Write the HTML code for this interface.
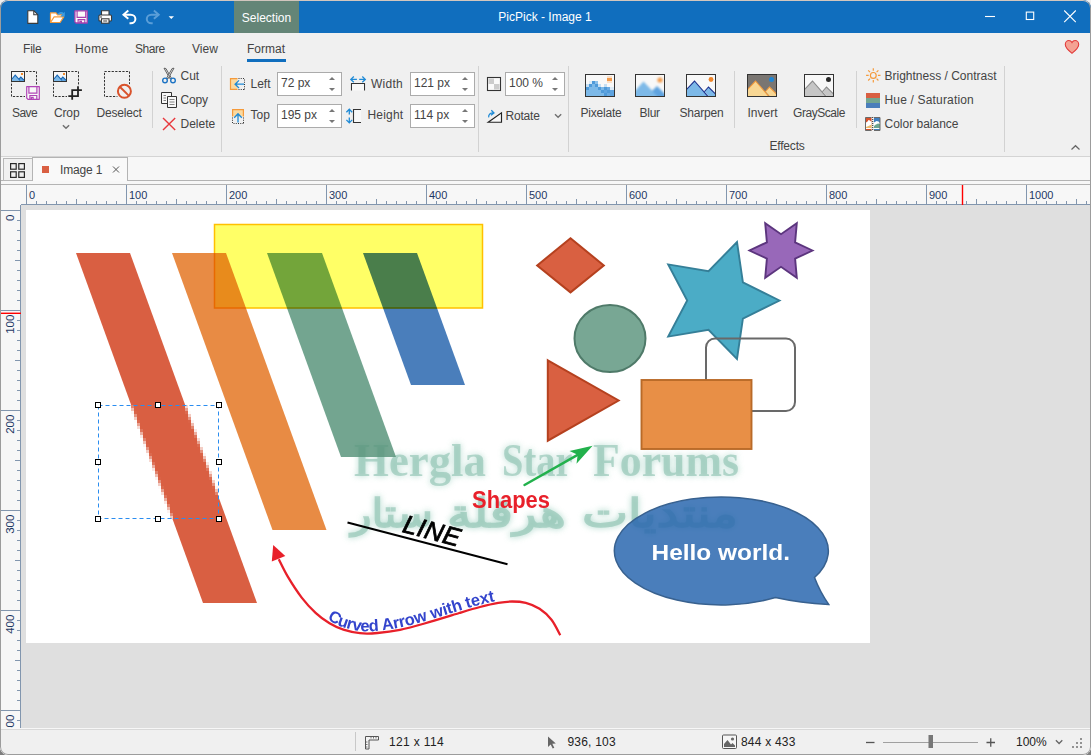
<!DOCTYPE html>
<html>
<head>
<meta charset="utf-8">
<title>PicPick - Image 1</title>
<style>
*{box-sizing:border-box;margin:0;padding:0}
html,body{width:1091px;height:755px;overflow:hidden;background:linear-gradient(#f1efee 0,#f1efee 50%,#7e7e7e 50%,#7e7e7e 100%);font-family:"Liberation Sans",sans-serif;font-size:12px;color:#444}
#win{position:absolute;left:0;top:0;width:1091px;height:755px;background:#f0f0f0;border-radius:8px;overflow:hidden}
#frame{position:absolute;left:0;top:0;width:1091px;height:755px;border-radius:8px;border:1px solid #9c9c9c;border-top-color:#d2c6be;pointer-events:none}
.abs{position:absolute}
#title{position:absolute;left:0;top:0;width:1091px;height:33px;background:#106ebe}
#seltab{position:absolute;left:234px;top:1px;width:65px;height:32px;background:#648577;color:#fff;text-align:center;line-height:14px;padding-top:9.5px;font-size:12px}
#ttext{position:absolute;left:445px;top:9.5px;width:200px;text-align:center;color:#fff;line-height:14px;font-size:12px}
.t{position:absolute;white-space:nowrap;line-height:14px;height:14px;font-size:12px;color:#444}
.sep{position:absolute;width:1px;background:#d2d2d2}
.inp{position:absolute;height:24px;background:#fff;border:1px solid #ababab}
.inp span{position:absolute;left:3px;top:3px;line-height:14px;font-size:12px;color:#444;white-space:nowrap}
.inp i{position:absolute;right:6px;width:0;height:0;border-left:3.5px solid transparent;border-right:3.5px solid transparent}
.inp i.u{top:4px;border-bottom:3.5px solid #777}
.inp i.d{top:15px;border-top:3.5px solid #777}
svg{position:absolute;overflow:visible}
</style>
</head>
<body>
<div id="win">
<!-- TITLE BAR -->
<div id="title"></div>
<div id="seltab">Selection</div>
<div id="ttext">PicPick - Image 1</div>
<svg style="left:0;top:0" width="200" height="33" viewBox="0 0 200 33">
<!-- new -->
<path d="M27.8 10.8h6.2l3.8 3.8v8.8h-10z" fill="#fff" stroke="#3a3a3a" stroke-width="1.1" stroke-linejoin="round"/>
<path d="M33.8 10.8v4h4" fill="none" stroke="#3a3a3a" stroke-width="1.1"/>
<!-- open -->
<path d="M50.5 22.5v-9.7h5.5l1.5 2h4.5v2.2" fill="#fff" stroke="#f59a3a" stroke-width="1.2" stroke-linejoin="round"/>
<path d="M50.5 22.5l3.6-5.6h9.6l-3.6 5.6z" fill="#fff" stroke="#f59a3a" stroke-width="1.2" stroke-linejoin="round"/>
<path d="M58.300 14.600c1-2 3.600-2.400 5.200-.600" fill="none" stroke="#3d9be0" stroke-width="1.600"/>
<path d="M64.800 11.800v4.600h-4.600z" fill="#3d9be0"/>
<!-- save -->
<path d="M74.900 10.800h12.300v12.200h-11.200l-1.100-1.100z" fill="#fafafa" stroke="#a83fae" stroke-width="1.300" stroke-linejoin="round"/>
<path d="M77.100 10.900v6.500h8.600v-6.500M78.100 22.900v-3.300h6.700v3.300M79.900 22.900v-1.600h1.500v1.600" fill="none" stroke="#a83fae" stroke-width="1.150"/>
<!-- print -->
<path d="M101.5 15v-4.3h7.5v4.3" fill="#fff" stroke="#3a3a3a" stroke-width="1.1"/>
<rect x="98.9" y="15" width="12.6" height="6" rx="1" fill="#fff" stroke="#3a3a3a" stroke-width="1.1"/>
<rect x="101.5" y="18.8" width="7.5" height="4.4" fill="#fff" stroke="#3a3a3a" stroke-width="1.1"/>
<path d="M103.200 21h4" stroke="#3a3a3a" stroke-width="1"/><rect x="100.300" y="16.300" width="1.400" height="1.400" fill="#3a3a3a"/>
<!-- undo -->
<path d="M128.3 10.6l-4.8 4.1 4.8 4.1" fill="none" stroke="#fff" stroke-width="2"/>
<path d="M123.8 14.7h7c2.6 0 4.6 1.9 4.6 4.3s-2 4.3-4.6 4.3h-1.3" fill="none" stroke="#fff" stroke-width="2"/>
<!-- redo -->
<path d="M153.9 10.6l4.8 4.1-4.8 4.1" fill="none" stroke="#5a9ed8" stroke-width="2"/>
<path d="M158.4 14.7h-7c-2.6 0-4.6 1.9-4.6 4.3s2 4.3 4.6 4.3h1.3" fill="none" stroke="#5a9ed8" stroke-width="2"/>
<!-- dd -->
<path d="M168.6 16.2h5.4l-2.7 2.8z" fill="#fff"/>
</svg>
<svg style="left:960px;top:0" width="131" height="62" viewBox="960 0 131 62">
<path d="M985 16.5h10" stroke="#fff" stroke-width="1.1"/>
<rect x="1026.3" y="12.1" width="7.4" height="7.4" fill="none" stroke="#fff" stroke-width="1.1"/>
<path d="M1064.2 10.5l11.6 11.6M1075.8 10.5l-11.6 11.6" stroke="#fff" stroke-width="1.1"/>
<path d="M1072 53.3c-3.5-2.8-6.7-5.300-6.700-8.800 0-2.300 1.700-4 3.600-4 1.400 0 2.500.8 3.100 2 .6-1.200 1.700-2 3.100-2 1.900 0 3.600 1.700 3.600 4 0 3.500-3.200 6-6.700 8.800z" fill="#f4a293" stroke="#e23a3a" stroke-width="1.1"/>
<path d="M1071.500 143.500l4 3.800 4-3.800" fill="none" stroke="#666" stroke-width="1.200" transform="translate(0,1) scale(1,-1) translate(0,-292)"/>
</svg>

<!-- MENU -->
<div class="t" style="left:23px;top:42px;letter-spacing:-0.2px">File</div>
<div class="t" style="left:75px;top:42px;letter-spacing:0.4px">Home</div>
<div class="t" style="left:135px;top:42px;letter-spacing:-0.45px">Share</div>
<div class="t" style="left:192px;top:42px">View</div>
<div class="t" style="left:247px;top:42px">Format</div>
<div class="abs" style="left:247px;top:59px;width:39px;height:3px;background:#106ebe"></div>
<svg style="left:0;top:62px" width="1091" height="95" viewBox="0 62 1091 95">
<rect x="11.5" y="71.5" width="25" height="25" fill="none" stroke="#333" stroke-width="1" stroke-dasharray="2.250 1.320"/><g transform="translate(11,71)"><rect x="0.500" y="0.500" width="13" height="10" fill="#f6f6f6" stroke="#333" stroke-width="1"/>
<path d="M1 8l3.200-3.800 3.600 3.800 2-2.200 3.200 3.200v1h-12z" fill="#7db9e8"/><path d="M8 8.200l1.800-2 3.200 3.200v.6h-3.600z" fill="#5ea3df"/><path d="M1 8l3.200-3.800 4.800 5.300M8 8.100l1.800-2.100 3.200 3.200" fill="none" stroke="#1565b5" stroke-width="1.100"/>
<rect x="10" y="2" width="2" height="2" fill="#f08a2c"/></g><g><rect x="25" y="85" width="16" height="16" fill="#f0f0f0"/><path d="M26.700 86.600h12.600v12.700h-11.300l-1.300-1.300z" fill="#f8f8f8" stroke="#b044b6" stroke-width="1.200" stroke-linejoin="round"/>
<path d="M28.900 86.800v6.400h8v-6.400M29.900 99.200v-3.700h6.900v3.700M31.400 99.200v-1.800h1.700v1.800" fill="none" stroke="#b044b6" stroke-width="1.200"/></g>
<rect x="53.5" y="71.5" width="25" height="25" fill="none" stroke="#333" stroke-width="1" stroke-dasharray="2.250 1.320"/><g transform="translate(53,71)"><rect x="0.500" y="0.500" width="13" height="10" fill="#f6f6f6" stroke="#333" stroke-width="1"/>
<path d="M1 8l3.200-3.800 3.600 3.800 2-2.200 3.200 3.200v1h-12z" fill="#7db9e8"/><path d="M8 8.200l1.800-2 3.200 3.200v.6h-3.600z" fill="#5ea3df"/><path d="M1 8l3.200-3.800 4.800 5.300M8 8.100l1.800-2.100 3.200 3.200" fill="none" stroke="#1565b5" stroke-width="1.100"/>
<rect x="10" y="2" width="2" height="2" fill="#f08a2c"/></g><rect x="67" y="85.500" width="16" height="15" fill="#f0f0f0"/>
<path d="M72.200 89.300v10.500M68.300 96.200h10.600M78 86.200v10.900M71.300 90.200h10.600" fill="none" stroke="#222" stroke-width="1.800"/>
<path d="M62.900 125.300l3.100 3 3.100-3" fill="none" stroke="#707070" stroke-width="1.500"/>
<rect x="104.5" y="71.5" width="25" height="25" fill="none" stroke="#333" stroke-width="1" stroke-dasharray="2.250 1.320"/><circle cx="124.400" cy="91.300" r="8.800" fill="#f0f0f0"/><circle cx="124.400" cy="91.300" r="6.500" fill="none" stroke="#d9532c" stroke-width="2"/><path d="M119.800 86.700l9.200 9.200" stroke="#d9532c" stroke-width="2"/>
<g><path d="M164 68.200l1.900.300 5.300 9.300-1.200 1z" fill="#e4e4e4" stroke="#555" stroke-width="0.900" stroke-linejoin="round"/>
<path d="M174 68.200l-1.900.300-5.300 9.300 1.200 1z" fill="#e4e4e4" stroke="#555" stroke-width="0.900" stroke-linejoin="round"/>
<circle cx="165" cy="80.400" r="2.300" fill="none" stroke="#1e74c4" stroke-width="1.400"/><circle cx="173" cy="80.400" r="2.300" fill="none" stroke="#1e74c4" stroke-width="1.400"/></g>
<g fill="#f8f8f8" stroke="#333" stroke-width="1"><path d="M161.500 92.500h10v11h-10z"/><path d="M167.500 96.500h9v11h-9z"/>
<path d="M163.500 95.500h2.500M163.500 98h2.500M163.500 100.500h2.500M169.500 99.500h5M169.500 102h5M169.500 104.500h5" fill="none" stroke="#666" stroke-width="0.800"/></g>
<path d="M163 118l12.200 12M175.200 118l-12.200 12" stroke="#e8383d" stroke-width="1.400"/>
<g><rect x="231" y="79" width="6.500" height="10" fill="#fad9a0"/><path d="M237.500 78.600h-7v10.800h7" fill="none" stroke="#f59a3a" stroke-width="1.200"/>
<path d="M238.500 78.500h6.500M244.500 79.500v10M238.500 89.500h5.500" fill="none" stroke="#333" stroke-width="1" stroke-dasharray="1 1.250"/>
<path d="M244 84.200h-8.600M239 80.400l-3.900 3.800 3.900 3.800" fill="none" stroke="#1e8ad6" stroke-width="1.300"/></g>
<g><rect x="233" y="110" width="10" height="6.500" fill="#fad9a0"/><path d="M232.600 116.500v-6.900h10.800v6.900" fill="none" stroke="#f59a3a" stroke-width="1.200"/>
<path d="M232.500 117.500v6.500M233.500 123.500h10M243.500 117.500v5.500" fill="none" stroke="#333" stroke-width="1" stroke-dasharray="1 1.250"/>
<path d="M238 122.500v-8.300M234.200 117.700l3.800-3.900 3.800 3.900" fill="none" stroke="#1e8ad6" stroke-width="1.300"/></g>
<g fill="none"><path d="M351.500 90.500v-7h13v7" stroke="#333" stroke-width="1.100"/><path d="M351.500 83.800h13" stroke="#333" stroke-width="1" fill="none"/>
<rect x="352" y="84" width="12" height="6.500" fill="#f8f8f8" stroke="none"/>
<path d="M350.800 79.400h6.100M353.800 76.500l-3 2.900 3 2.900M365.300 79.400h-6.100M362.300 76.500l3 2.900-3 2.900" stroke="#1e8ad6" stroke-width="1.300"/></g>
<g fill="none"><rect x="353.500" y="109.500" width="7.500" height="13" fill="#f8f8f8" stroke="none"/><path d="M361 109.500h-7.500v13h7.500" stroke="#333" stroke-width="1.100"/>
<path d="M349.300 109.400v5.200M349.300 122.800v-5.200M346.400 112.300l2.900-3 2.900 3M346.400 119.900l2.900 3 2.900-3" stroke="#1e8ad6" stroke-width="1.300"/></g>
<g><rect x="487.500" y="77.500" width="13" height="13" fill="#fafafa" stroke="#333" stroke-width="1.100"/><rect x="488.500" y="78.500" width="5.500" height="5.500" fill="#ccc"/><rect x="494" y="84" width="5.500" height="5.500" fill="#ccc"/></g>
<g fill="none"><path d="M488.200 122.200h13.300v-9.400z" fill="#f8f8f8" stroke="#222" stroke-width="1.150" stroke-linejoin="miter"/>
<path d="M488.700 117.300c-.400-2.800 1.600-4.500 4.800-4.300M491.300 110.200l2.700 2.800-3 2.300" stroke="#1e8ad6" stroke-width="1.250"/></g>
<path d="M555 114.200l3.100 3 3.100-3" fill="none" stroke="#707070" stroke-width="1.400"/>
</svg>
<div class="sep" style="left:152px;top:71px;height:57px"></div>
<div class="sep" style="left:221px;top:66px;height:86px"></div>
<div class="sep" style="left:478px;top:66px;height:86px"></div>
<div class="sep" style="left:568px;top:66px;height:86px"></div>
<div class="sep" style="left:734px;top:71px;height:57px"></div>
<div class="sep" style="left:856px;top:71px;height:57px"></div>
<div class="sep" style="left:1004px;top:66px;height:86px"></div>
<div class="t" style="left:12px;top:106px;letter-spacing:-0.6px">Save</div>
<div class="t" style="left:54px;top:106px;letter-spacing:-0.15px">Crop</div>
<div class="t" style="left:96.5px;top:106px;letter-spacing:-0.2px">Deselect</div>
<div class="t" style="left:180.5px;top:69px">Cut</div>
<div class="t" style="left:180.5px;top:93px;letter-spacing:-0.2px">Copy</div>
<div class="t" style="left:180.5px;top:116.6px">Delete</div>
<div class="t" style="left:250.5px;top:76.5px">Left</div>
<div class="t" style="left:250.5px;top:108px">Top</div>
<div class="t" style="left:371px;top:76.5px;letter-spacing:0.25px">Width</div>
<div class="t" style="left:367.5px;top:108px;letter-spacing:0.2px">Height</div>
<div class="t" style="left:505.5px;top:108.5px;letter-spacing:-0.2px">Rotate</div>
<div class="t" style="left:580.5px;top:106px;letter-spacing:-0.2px">Pixelate</div>
<div class="t" style="left:639.5px;top:106px;letter-spacing:-0.25px">Blur</div>
<div class="t" style="left:679.5px;top:106px;letter-spacing:-0.2px">Sharpen</div>
<div class="t" style="left:747.5px;top:106px">Invert</div>
<div class="t" style="left:793px;top:106px;letter-spacing:-0.45px">GrayScale</div>
<div class="t" style="left:769.5px;top:138.5px;letter-spacing:-0.2px">Effects</div>
<div class="t" style="left:884.5px;top:69px">Brightness / Contrast</div>
<div class="t" style="left:884.5px;top:93px;letter-spacing:0.17px">Hue / Saturation</div>
<div class="t" style="left:884.5px;top:116.5px">Color balance</div>
<div class="inp" style="left:277px;top:72px;width:65px"><span>72 px</span><i class="u"></i><i class="d"></i></div>
<div class="inp" style="left:277px;top:104px;width:65px"><span>195 px</span><i class="u"></i><i class="d"></i></div>
<div class="inp" style="left:410px;top:72px;width:65px"><span>121 px</span><i class="u"></i><i class="d"></i></div>
<div class="inp" style="left:410px;top:104px;width:65px"><span>114 px</span><i class="u"></i><i class="d"></i></div>
<div class="inp" style="left:505px;top:72px;width:60px"><span>100 %</span><i class="u"></i><i class="d"></i></div>
<div class="abs" style="left:0;top:156px;width:1091px;height:1px;background:#d4d4d4"></div>
<svg style="left:570px;top:62px" width="320" height="80" viewBox="570 62 320 80">
<defs>
<filter id="bl" x="-10%" y="-10%" width="120%" height="120%"><feGaussianBlur stdDeviation="0.9"/></filter>
<clipPath id="cp1"><rect x="586" y="75" width="28" height="21"/></clipPath>
<clipPath id="cp2"><rect x="636" y="75" width="28" height="21"/></clipPath>
<clipPath id="cp3"><rect x="687" y="75" width="28" height="21"/></clipPath>
<clipPath id="cp4"><rect x="748" y="75" width="28" height="21"/></clipPath>
<clipPath id="cp5"><rect x="805" y="75" width="28" height="21"/></clipPath>
</defs>
<!-- Pixelate -->
<rect x="585.500" y="74.500" width="29" height="22" fill="#f8f8f8" stroke="#333" stroke-width="1"/>
<g clip-path="url(#cp1)" shape-rendering="crispEdges">
<rect x="586" y="90" width="28" height="6" fill="#7db9e8"/>
<rect x="586" y="87" width="20" height="3" fill="#7db9e8"/>
<rect x="586" y="87" width="3" height="3" fill="#4f9ad9"/>
<rect x="589" y="84" width="3" height="3" fill="#4f9ad9"/><rect x="592" y="84" width="3" height="3" fill="#7db9e8"/><rect x="595" y="84" width="3" height="3" fill="#4f9ad9"/><rect x="586" y="84" width="3" height="3" fill="#c5dff4"/>
<rect x="592" y="81" width="3" height="3" fill="#4f9ad9"/><rect x="595" y="81" width="3" height="3" fill="#8cc0ea"/><rect x="589" y="81" width="3" height="3" fill="#dcebf7"/>
<rect x="598" y="84" width="3" height="3" fill="#c5dff4"/><rect x="598" y="87" width="3" height="3" fill="#4f9ad9"/><rect x="601" y="87" width="3" height="3" fill="#7db9e8"/>
<rect x="601" y="90" width="3" height="3" fill="#4f9ad9"/><rect x="604" y="87" width="3" height="3" fill="#4f9ad9"/><rect x="607" y="87" width="3" height="3" fill="#6aaae2"/><rect x="604" y="84" width="3" height="3" fill="#c5dff4"/>
<rect x="604" y="90" width="3" height="3" fill="#5ea3df"/><rect x="607" y="90" width="3" height="3" fill="#4f9ad9"/><rect x="610" y="90" width="4" height="3" fill="#5ea3df"/><rect x="610" y="87" width="4" height="3" fill="#dcebf7"/>
<rect x="604" y="93" width="3" height="3" fill="#4f9ad9"/><rect x="607" y="93" width="3" height="3" fill="#6aaae2"/><rect x="610" y="93" width="4" height="3" fill="#5ea3df"/>
<rect x="607" y="78" width="5" height="3" fill="#f39a4a"/><rect x="607" y="75.500" width="5" height="2.500" fill="#fbe0c8"/><rect x="607" y="81" width="5" height="2" fill="#fbe0c8"/>
</g>
<!-- Blur -->
<rect x="635.500" y="74.500" width="29" height="22" fill="#f8f8f8" stroke="#333" stroke-width="1"/>
<g clip-path="url(#cp2)"><g filter="url(#bl)">
<path d="M634 92l9.500-10.500 9.500 10 4-4 9 9v2h-32z" fill="#7db9e8"/>
<path d="M652 91l5-5 9 9v3h-7z" fill="#5ea3df"/>
<circle cx="660" cy="80" r="2.600" fill="#f39a4a"/></g></g>
<!-- Sharpen -->
<rect x="686.500" y="74.500" width="29" height="22" fill="#f8f8f8" stroke="#333" stroke-width="1"/>
<g clip-path="url(#cp3)">
<path d="M686 90l8.500-9 13 15h-21.500z" fill="#7db9e8"/>
<path d="M704.500 91.500l4-4.500 8 8v2h-7z" fill="#7db9e8"/>
<path d="M686 90l8.500-9 13.500 15.500M704.500 91.500l4-4.500 8 8" fill="none" stroke="#1c2f8c" stroke-width="1.100"/>
<circle cx="711" cy="79.500" r="2.400" fill="#f0862a"/></g>
<!-- Invert -->
<rect x="747.500" y="74.500" width="29" height="22" fill="#7a7672" stroke="#333" stroke-width="1"/>
<g clip-path="url(#cp4)">
<path d="M747 90l8.500-9 13 15h-21.500z" fill="#f8d794"/>
<path d="M765.500 91.500l4-4.500 8 8v2h-7z" fill="#f8d794"/>
<path d="M747 90l8.500-9 13.500 15.500M765.500 91.500l4-4.500 8 8" fill="none" stroke="#f59a3a" stroke-width="1.100"/>
<circle cx="771.500" cy="79.500" r="2.500" fill="#1e86d6"/></g>
<!-- GrayScale -->
<rect x="804.500" y="74.500" width="29" height="22" fill="#f8f8f8" stroke="#333" stroke-width="1"/>
<g clip-path="url(#cp5)">
<path d="M804 90l8.500-9 13 15h-21.500z" fill="#c6c6c6"/>
<path d="M822.500 91.500l4-4.500 8 8v2h-7z" fill="#c6c6c6"/>
<path d="M804 90l8.500-9 13.500 15.500M822.500 91.500l4-4.500 8 8" fill="none" stroke="#8a8a8a" stroke-width="1.100"/>
<circle cx="828.500" cy="79.500" r="2.500" fill="#2a2a2a"/></g>
</svg>
<svg style="left:860px;top:62px" width="30" height="80" viewBox="860 62 30 80">
<!-- sun -->
<g fill="none" stroke="#f59a3a" stroke-width="1.200"><circle cx="873.300" cy="75.400" r="2.900"/>
<path d="M873.300 68.200v2.600M873.300 80v2.600M866.100 75.400h2.600M877.900 75.400h2.600M868.200 70.300l1.800 1.800M876.600 78.700l1.800 1.800M868.200 80.500l1.800-1.800M876.600 72.100l1.800-1.800"/></g>
<!-- hue -->
<rect x="866" y="93" width="14" height="5" fill="#d95f42"/><rect x="866" y="98" width="14" height="5" fill="#73a590"/><rect x="866" y="103" width="14" height="5" fill="#4a7ebb"/>
<!-- color balance -->
<rect x="865.500" y="117.500" width="6" height="13" fill="#d8502a"/>
<path d="M866 122.500l1.500-1 1-1.500 1.500.500 1.500 1.500v6.500h-5.500z" fill="#fff"/><path d="M866 127l2.500-1 3-1.500v4h-5.500z" fill="#ecbb6c"/><rect x="866" y="128" width="5.500" height="1" fill="#fff"/>
<path d="M871.500 117.500h-6v13h6" fill="none" stroke="#6a6a6a" stroke-width="1"/>
<rect x="874" y="117.500" width="6" height="13" fill="#3f7fc0"/>
<path d="M874 122.500l2.500-1.500 2 .500 1.500 1.500v5.500h-6z" fill="#fff"/><path d="M874 126l2-1.500 2-1 2 .500v4h-6z" fill="#6fa590"/><rect x="874" y="128" width="5.500" height="1" fill="#fff"/>
<path d="M874 117.500h6v13h-6" fill="none" stroke="#6a6a6a" stroke-width="1"/>
<path d="M872.700 117v14" stroke="#333" stroke-width="1.100" stroke-dasharray="1 1"/>
</svg>

<div class="abs" style="left:0;top:157px;width:1091px;height:28px;background:#f7f7f7"></div>
<div class="abs" style="left:0;top:180px;width:1091px;height:1px;background:#b4b4b4"></div>
<div class="abs" style="left:1px;top:184px;width:1089px;height:1px;background:#b4b4b4"></div>
<div class="abs" style="left:3px;top:158px;width:30px;height:23px;background:#f0f0f0;border:1px solid #b8b8b8"></div>
<div class="abs" style="left:32px;top:157px;width:96px;height:24px;background:#f9f9f9;border:1px solid #b4b4b4;border-bottom:none"></div>
<svg style="left:0;top:157px" width="140" height="28" viewBox="0 157 140 28">
<g fill="none" stroke="#2a2a2a" stroke-width="1.200"><rect x="10.600" y="163.600" width="5.600" height="5.600"/><rect x="18.800" y="163.600" width="5.600" height="5.600"/><rect x="10.600" y="171.800" width="5.600" height="5.600"/><rect x="18.800" y="171.800" width="5.600" height="5.600"/></g>
<rect x="42" y="166" width="7" height="7" fill="#d95f42"/>
<path d="M113 166.500l6 6M119 166.500l-6 6" stroke="#555" stroke-width="1"/>
</svg>
<div class="t" style="left:60px;top:162.500px;letter-spacing:-0.15px">Image 1</div>

<div class="abs" style="left:1px;top:185px;width:1089px;height:20px;background:#f7f7f7"></div>
<div class="abs" style="left:1px;top:205px;width:20px;height:523px;background:#f7f7f7"></div>
<svg style="left:0;top:185px" width="1091" height="543" viewBox="0 185 1091 543" font-family="Liberation Sans, sans-serif" font-size="11" fill="#1f3864">
<path d="M21 204.500h1069" stroke="#8296ae" stroke-width="1"/>
<path d="M20.500 205v523" stroke="#8296ae" stroke-width="1"/>
<path d="M1 210.500h20" stroke="#8296ae" stroke-width="1"/>
<path d="M26.5 185v19M36.5 201v3M46.5 201v3M56.5 201v3M66.5 201v3M76.5 199v5M86.5 201v3M96.5 201v3M106.5 201v3M116.5 201v3M126.5 185v19M136.5 201v3M146.5 201v3M156.5 201v3M166.5 201v3M176.5 199v5M186.5 201v3M196.5 201v3M206.5 201v3M216.5 201v3M226.5 185v19M236.5 201v3M246.5 201v3M256.5 201v3M266.5 201v3M276.5 199v5M286.5 201v3M296.5 201v3M306.5 201v3M316.5 201v3M326.5 185v19M336.5 201v3M346.5 201v3M356.5 201v3M366.5 201v3M376.5 199v5M386.5 201v3M396.5 201v3M406.5 201v3M416.5 201v3M426.5 185v19M436.5 201v3M446.5 201v3M456.5 201v3M466.5 201v3M476.5 199v5M486.5 201v3M496.5 201v3M506.5 201v3M516.5 201v3M526.5 185v19M536.5 201v3M546.5 201v3M556.5 201v3M566.5 201v3M576.5 199v5M586.5 201v3M596.5 201v3M606.5 201v3M616.5 201v3M626.5 185v19M636.5 201v3M646.5 201v3M656.5 201v3M666.5 201v3M676.5 199v5M686.5 201v3M696.5 201v3M706.5 201v3M716.5 201v3M726.5 185v19M736.5 201v3M746.5 201v3M756.5 201v3M766.5 201v3M776.5 199v5M786.5 201v3M796.5 201v3M806.5 201v3M816.5 201v3M826.5 185v19M836.5 201v3M846.5 201v3M856.5 201v3M866.5 201v3M876.5 199v5M886.5 201v3M896.5 201v3M906.5 201v3M916.5 201v3M926.5 185v19M936.5 201v3M946.5 201v3M956.5 201v3M966.5 201v3M976.5 199v5M986.5 201v3M996.5 201v3M1006.5 201v3M1016.5 201v3M1026.5 185v19M1036.5 201v3M1046.5 201v3M1056.5 201v3M1066.5 201v3M1076.5 199v5M1086.5 201v3" stroke="#8296ae" stroke-width="1" fill="none"/>
<text x="29.0" y="198.700">0</text><text x="129.0" y="198.700">100</text><text x="229.0" y="198.700">200</text><text x="329.0" y="198.700">300</text><text x="429.0" y="198.700">400</text><text x="529.0" y="198.700">500</text><text x="629.0" y="198.700">600</text><text x="729.0" y="198.700">700</text><text x="829.0" y="198.700">800</text><text x="929.0" y="198.700">900</text><text x="1029.0" y="198.700">1000</text>
<path d="M17 220.5h3M17 230.5h3M17 240.5h3M17 250.5h3M15 260.5h5M17 270.5h3M17 280.5h3M17 290.5h3M17 300.5h3M1 310.5h19M17 320.5h3M17 330.5h3M17 340.5h3M17 350.5h3M15 360.5h5M17 370.5h3M17 380.5h3M17 390.5h3M17 400.5h3M1 410.5h19M17 420.5h3M17 430.5h3M17 440.5h3M17 450.5h3M15 460.5h5M17 470.5h3M17 480.5h3M17 490.5h3M17 500.5h3M1 510.5h19M17 520.5h3M17 530.5h3M17 540.5h3M17 550.5h3M15 560.5h5M17 570.5h3M17 580.5h3M17 590.5h3M17 600.5h3M1 610.5h19M17 620.5h3M17 630.5h3M17 640.5h3M17 650.5h3M15 660.5h5M17 670.5h3M17 680.5h3M17 690.5h3M17 700.5h3M1 710.5h19M17 720.5h3" stroke="#8296ae" stroke-width="1" fill="none"/>
<text x="14" y="214.6" font-size="11.500" text-anchor="end" transform="rotate(-90 14 214.6)">0</text><text x="14" y="314.6" font-size="11.500" text-anchor="end" transform="rotate(-90 14 314.6)">100</text><text x="14" y="414.6" font-size="11.500" text-anchor="end" transform="rotate(-90 14 414.6)">200</text><text x="14" y="514.6" font-size="11.500" text-anchor="end" transform="rotate(-90 14 514.6)">300</text><text x="14" y="614.6" font-size="11.500" text-anchor="end" transform="rotate(-90 14 614.6)">400</text><text x="14" y="714.6" font-size="11.500" text-anchor="end" transform="rotate(-90 14 714.6)">500</text>
<path d="M962.500 185v20" stroke="#f00" stroke-width="1.400"/><path d="M1 313.300h20" stroke="#f00" stroke-width="1.400"/>
</svg>

<div class="abs" style="left:21px;top:205px;width:1069px;height:523px;background:#dfdfdf"></div>
<div class="abs" style="left:26px;top:210px;width:844px;height:433px;background:#fff;overflow:hidden;isolation:isolate" id="img">
<svg style="left:0;top:0" width="844" height="433" viewBox="26 210 844 433">
<defs><filter id="glow" filterUnits="userSpaceOnUse" x="330" y="430" width="430" height="125"><feGaussianBlur stdDeviation="3"/></filter></defs>
<g fill="#a9d6c8" opacity="0.850" filter="url(#glow)">
<g font-family="Liberation Serif, serif" font-weight="bold" font-size="46"><text x="354" y="475.500" textLength="132" lengthAdjust="spacingAndGlyphs">Hergla</text><text x="502" y="475.500" textLength="70.5" lengthAdjust="spacingAndGlyphs">Star</text><text x="593" y="475.500" textLength="146" lengthAdjust="spacingAndGlyphs">Forums</text></g>
<g font-family="DejaVu Sans, sans-serif" font-size="39" stroke="#a9d6c8" stroke-width="2"><text x="351" y="526.500" textLength="82" lengthAdjust="spacingAndGlyphs">ستار</text><text x="447" y="526.500" textLength="119" lengthAdjust="spacingAndGlyphs">هرقلة</text><text x="582" y="526.500" textLength="156" lengthAdjust="spacingAndGlyphs">منتديات</text></g>
</g>
<g fill="#8fc3b2" opacity="0.620">
<g font-family="Liberation Serif, serif" font-weight="bold" font-size="46"><text x="354" y="475.500" textLength="132" lengthAdjust="spacingAndGlyphs">Hergla</text><text x="502" y="475.500" textLength="70.5" lengthAdjust="spacingAndGlyphs">Star</text><text x="593" y="475.500" textLength="146" lengthAdjust="spacingAndGlyphs">Forums</text></g>
<g font-family="DejaVu Sans, sans-serif" font-size="39" stroke="#8fc3b2" stroke-width="1.500"><text x="351" y="526.500" textLength="82" lengthAdjust="spacingAndGlyphs">ستار</text><text x="447" y="526.500" textLength="119" lengthAdjust="spacingAndGlyphs">هرقلة</text><text x="582" y="526.500" textLength="156" lengthAdjust="spacingAndGlyphs">منتديات</text></g>
</g>
<polygon points="76,253 130,253 257,603 203,603" fill="#d95f42"/>
<polygon points="172,253 226,253 326.500,530 272.500,530" fill="#e88b44"/>
<polygon points="267,253 322,253 396,457 341,457" fill="#5a957c" fill-opacity="0.850"/>
<polygon points="363,253 417,253 465,385 411,385" fill="#4a7ebb"/>
<rect x="214.500" y="224.500" width="268" height="83.500" fill="#ffff66" stroke="#ffc000" stroke-width="1.500" style="mix-blend-mode:multiply"/>
<polygon points="570.500,238.200 603.800,265.500 570.500,292.400 537.200,265.500" fill="#d96041" stroke="#b5411f" stroke-width="2"/>
<ellipse cx="610" cy="338.500" rx="35.500" ry="33.500" fill="#78a794" stroke="#4f7a69" stroke-width="2"/>
<polygon points="547.800,360.300 618.600,400.500 547.800,440.700" fill="#d96041" stroke="#b5411f" stroke-width="2"/>
<polygon points="779.5,300.5 742.9,282.4 737.0,242.0 708.5,271.2 668.2,264.4 687.2,300.5 668.2,336.6 708.5,329.8 737.0,359.0 742.9,318.6" fill="#4bacc6" stroke="#357f98" stroke-width="1.900"/>
<rect x="706" y="338.500" width="89" height="72.500" rx="9" fill="none" stroke="#696969" stroke-width="2"/>
<rect x="641.500" y="380" width="110" height="69" fill="#e88f46" stroke="#b96a28" stroke-width="1.900"/>
<polygon points="812.5,250.5 795.1,242.3 796.8,223.2 781.0,234.2 765.2,223.2 766.9,242.3 749.5,250.5 766.9,258.6 765.2,277.8 781.0,266.8 796.8,277.8 795.1,258.7" fill="#9868b9" stroke="#5c357e" stroke-width="1.900"/>
<path d="M814.500 577.500 A107 54 0 1 0 775.500 597.500 Q800 603 828.700 604.400 Q820 592 814.500 577.500z" fill="#2a67af" fill-opacity="0.850" stroke="#38618f" stroke-width="1.500"/>
<text x="651.500" y="559.500" font-family="Liberation Sans, sans-serif" font-weight="bold" font-size="22" fill="#fff" textLength="138.500" lengthAdjust="spacingAndGlyphs">Hello world.</text>
<linearGradient id="wg" x1="0" y1="0" x2="0" y2="1"><stop offset="0" stop-color="#c4e1d8"/><stop offset="1" stop-color="#86b9a8"/></linearGradient>
<path d="M524.500 485l54-30.600" stroke="#22b14c" stroke-width="2.500" stroke-linecap="round" fill="none"/><path d="M592.600 445.700l-23.100 5.400 8.200 3.700-1.200 8.900z" fill="#22b14c"/>
<path d="M347.500 522.500l160 41.700" stroke="#000" stroke-width="2"/>
<text x="401.500" y="531.800" transform="rotate(14.800 401.500 531.800)" font-family="Liberation Sans, sans-serif" font-size="25.500" font-style="italic" fill="#000" stroke="#000" stroke-width="0.800" textLength="58" lengthAdjust="spacing">LINE</text>
<text x="472" y="508" font-family="Liberation Sans, sans-serif" font-weight="bold" font-size="23.500" fill="#e8202a" textLength="78" lengthAdjust="spacingAndGlyphs">Shapes</text>
<path id="crv" d="M278.8 559.3C280.3 562.2 284.0 570.3 287.8 576.7C291.6 583.1 297.1 591.6 301.7 597.6C306.3 603.6 311.0 608.6 315.6 612.9C320.2 617.2 324.9 620.5 329.5 623.3C334.1 626.1 338.3 628.0 343.4 629.6C348.5 631.2 354.3 632.6 360 633.2C365.7 633.8 370.8 633.6 377.5 633C384.2 632.4 392.2 631.4 400 629.8C407.8 628.2 414.6 626.3 424.5 623.5C434.4 620.7 450.1 615.8 459.3 613C468.6 610.2 473.5 608.7 480 607C486.5 605.3 492.9 603.8 498.3 602.9C503.7 602.0 507.5 601.5 512.1 601.5C516.7 601.5 521.2 601.7 525.8 602.9C530.4 604.1 535.3 606.0 539.6 608.8C543.9 611.6 548.1 615.4 551.5 619.8C554.9 624.2 558.8 632.6 560.2 635.2" fill="none" stroke="#e8202a" stroke-width="2.300"/>
<path d="M273.200 545l12.100 11.100-13.500 5.300z" fill="#e8202a"/>
<text font-family="Liberation Sans, sans-serif" font-weight="bold" font-size="16.500" fill="#3344cc"><textPath href="#crv" startOffset="78.500" textLength="176" lengthAdjust="spacing"><tspan dy="-2.200">Curved Arrow with text</tspan></textPath></text>
</svg>
</div>
<svg style="left:90px;top:398px" width="140" height="130" viewBox="90 398 140 130">
<g shape-rendering="crispEdges"><rect x="98" y="405" width="121" height="114" fill="#fff"/><rect x="131" y="405" width="3" height="3" fill="#e2846d"/><rect x="134" y="405" width="51" height="3" fill="#d95f42"/><rect x="185" y="405" width="3" height="3" fill="#f6dad4"/><rect x="131" y="408" width="3" height="3" fill="#f0bfb3"/><rect x="134" y="408" width="51" height="3" fill="#d95f42"/><rect x="185" y="408" width="3" height="3" fill="#e89f8e"/><rect x="131" y="411" width="3" height="3" fill="#fcf4f2"/><rect x="134" y="411" width="3" height="3" fill="#da6448"/><rect x="137" y="411" width="48" height="3" fill="#d95f42"/><rect x="185" y="411" width="3" height="3" fill="#dc6a4f"/><rect x="188" y="411" width="3" height="3" fill="#fefaf9"/><rect x="134" y="414" width="3" height="3" fill="#e5927e"/><rect x="137" y="414" width="51" height="3" fill="#d95f42"/><rect x="188" y="414" width="3" height="3" fill="#f3ccc3"/><rect x="134" y="417" width="3" height="3" fill="#f3ccc3"/><rect x="137" y="417" width="51" height="3" fill="#d95f42"/><rect x="188" y="417" width="3" height="3" fill="#e5927e"/><rect x="134" y="420" width="3" height="3" fill="#fefcfb"/><rect x="137" y="420" width="3" height="3" fill="#dc6a4f"/><rect x="140" y="420" width="48" height="3" fill="#d95f42"/><rect x="188" y="420" width="3" height="3" fill="#da6246"/><rect x="191" y="420" width="3" height="3" fill="#fcf4f2"/><rect x="137" y="423" width="3" height="3" fill="#e9a18f"/><rect x="140" y="423" width="51" height="3" fill="#d95f42"/><rect x="191" y="423" width="3" height="3" fill="#efbdb2"/><rect x="137" y="426" width="3" height="3" fill="#f6dad4"/><rect x="140" y="426" width="51" height="3" fill="#d95f42"/><rect x="191" y="426" width="3" height="3" fill="#e2846d"/><rect x="140" y="429" width="3" height="3" fill="#de755c"/><rect x="143" y="429" width="51" height="3" fill="#d95f42"/><rect x="194" y="429" width="3" height="3" fill="#fae9e5"/><rect x="140" y="432" width="3" height="3" fill="#ecafa0"/><rect x="143" y="432" width="51" height="3" fill="#d95f42"/><rect x="194" y="432" width="3" height="3" fill="#ecafa0"/><rect x="140" y="435" width="3" height="3" fill="#fae9e5"/><rect x="143" y="435" width="51" height="3" fill="#d95f42"/><rect x="194" y="435" width="3" height="3" fill="#de755c"/><rect x="143" y="438" width="3" height="3" fill="#e1826c"/><rect x="146" y="438" width="51" height="3" fill="#d95f42"/><rect x="197" y="438" width="3" height="3" fill="#f7dcd5"/><rect x="143" y="441" width="3" height="3" fill="#efbdb2"/><rect x="146" y="441" width="51" height="3" fill="#d95f42"/><rect x="197" y="441" width="3" height="3" fill="#e9a18f"/><rect x="143" y="444" width="3" height="3" fill="#fcf4f2"/><rect x="146" y="444" width="3" height="3" fill="#da6246"/><rect x="149" y="444" width="48" height="3" fill="#d95f42"/><rect x="197" y="444" width="3" height="3" fill="#dc6a4f"/><rect x="200" y="444" width="3" height="3" fill="#fefcfb"/><rect x="146" y="447" width="3" height="3" fill="#e5917d"/><rect x="149" y="447" width="51" height="3" fill="#d95f42"/><rect x="200" y="447" width="3" height="3" fill="#f3cdc4"/><rect x="146" y="450" width="3" height="3" fill="#f3ccc3"/><rect x="149" y="450" width="51" height="3" fill="#d95f42"/><rect x="200" y="450" width="3" height="3" fill="#e5927e"/><rect x="146" y="453" width="3" height="3" fill="#fefaf9"/><rect x="149" y="453" width="3" height="3" fill="#dc6a4f"/><rect x="152" y="453" width="48" height="3" fill="#d95f42"/><rect x="200" y="453" width="3" height="3" fill="#da6448"/><rect x="203" y="453" width="3" height="3" fill="#fcf4f2"/><rect x="149" y="456" width="3" height="3" fill="#e89f8e"/><rect x="152" y="456" width="51" height="3" fill="#d95f42"/><rect x="203" y="456" width="3" height="3" fill="#f0bfb3"/><rect x="149" y="459" width="3" height="3" fill="#f6d9d2"/><rect x="152" y="459" width="51" height="3" fill="#d95f42"/><rect x="203" y="459" width="3" height="3" fill="#e2856f"/><rect x="152" y="462" width="3" height="3" fill="#de745b"/><rect x="155" y="462" width="51" height="3" fill="#d95f42"/><rect x="206" y="462" width="3" height="3" fill="#faeae6"/><rect x="152" y="465" width="3" height="3" fill="#ecad9f"/><rect x="155" y="465" width="51" height="3" fill="#d95f42"/><rect x="206" y="465" width="3" height="3" fill="#ecb1a2"/><rect x="152" y="468" width="3" height="3" fill="#f9e7e3"/><rect x="155" y="468" width="51" height="3" fill="#d95f42"/><rect x="206" y="468" width="3" height="3" fill="#df775e"/><rect x="155" y="471" width="3" height="3" fill="#e1826c"/><rect x="158" y="471" width="51" height="3" fill="#d95f42"/><rect x="209" y="471" width="3" height="3" fill="#f7dcd5"/><rect x="155" y="474" width="3" height="3" fill="#efbcb0"/><rect x="158" y="474" width="51" height="3" fill="#d95f42"/><rect x="209" y="474" width="3" height="3" fill="#e9a291"/><rect x="155" y="477" width="3" height="3" fill="#fcf2f0"/><rect x="158" y="477" width="3" height="3" fill="#da6246"/><rect x="161" y="477" width="48" height="3" fill="#d95f42"/><rect x="209" y="477" width="3" height="3" fill="#dc6c51"/><rect x="212" y="477" width="3" height="3" fill="#fefcfb"/><rect x="158" y="480" width="3" height="3" fill="#e48f7b"/><rect x="161" y="480" width="51" height="3" fill="#d95f42"/><rect x="212" y="480" width="3" height="3" fill="#f4cfc6"/><rect x="158" y="483" width="3" height="3" fill="#f2cac1"/><rect x="161" y="483" width="51" height="3" fill="#d95f42"/><rect x="212" y="483" width="3" height="3" fill="#e69480"/><rect x="158" y="486" width="3" height="3" fill="#fefaf9"/><rect x="161" y="486" width="3" height="3" fill="#db694d"/><rect x="164" y="486" width="48" height="3" fill="#d95f42"/><rect x="212" y="486" width="3" height="3" fill="#da6448"/><rect x="215" y="486" width="3" height="3" fill="#fdf5f4"/><rect x="161" y="489" width="3" height="3" fill="#e89d8c"/><rect x="164" y="489" width="51" height="3" fill="#d95f42"/><rect x="215" y="489" width="3" height="3" fill="#f0c1b5"/><rect x="161" y="492" width="3" height="3" fill="#f6d9d2"/><rect x="164" y="492" width="51" height="3" fill="#d95f42"/><rect x="215" y="492" width="3" height="3" fill="#e2856f"/><rect x="164" y="495" width="3" height="3" fill="#de7259"/><rect x="167" y="495" width="51" height="3" fill="#d95f42"/><rect x="218" y="495" width="1" height="3" fill="#f1c5bb"/><rect x="164" y="498" width="3" height="3" fill="#ebac9d"/><rect x="167" y="498" width="52" height="3" fill="#d95f42"/><rect x="164" y="501" width="3" height="3" fill="#f9e5e1"/><rect x="167" y="501" width="52" height="3" fill="#d95f42"/><rect x="167" y="504" width="3" height="3" fill="#e1816a"/><rect x="170" y="504" width="49" height="3" fill="#d95f42"/><rect x="167" y="507" width="3" height="3" fill="#efbaae"/><rect x="170" y="507" width="49" height="3" fill="#d95f42"/><rect x="167" y="510" width="3" height="3" fill="#fcf2f0"/><rect x="170" y="510" width="3" height="3" fill="#da6246"/><rect x="173" y="510" width="46" height="3" fill="#d95f42"/><rect x="170" y="513" width="3" height="3" fill="#e48f7b"/><rect x="173" y="513" width="46" height="3" fill="#d95f42"/><rect x="170" y="516" width="3" height="3" fill="#f2c9bf"/><rect x="173" y="516" width="46" height="3" fill="#d95f42"/></g>
<rect x="98.500" y="405.500" width="120" height="113" fill="none" stroke="#2a8df0" stroke-width="1" stroke-dasharray="4 3"/>
<rect x="95.5" y="402.5" width="5" height="5" fill="#fff" stroke="#000" stroke-width="1"/><rect x="155.5" y="402.5" width="5" height="5" fill="#fff" stroke="#000" stroke-width="1"/><rect x="216.5" y="402.5" width="5" height="5" fill="#fff" stroke="#000" stroke-width="1"/><rect x="95.5" y="459.5" width="5" height="5" fill="#fff" stroke="#000" stroke-width="1"/><rect x="216.5" y="459.5" width="5" height="5" fill="#fff" stroke="#000" stroke-width="1"/><rect x="95.5" y="516.5" width="5" height="5" fill="#fff" stroke="#000" stroke-width="1"/><rect x="155.5" y="516.5" width="5" height="5" fill="#fff" stroke="#000" stroke-width="1"/><rect x="216.5" y="516.5" width="5" height="5" fill="#fff" stroke="#000" stroke-width="1"/>
</svg>

<div class="abs" style="left:0;top:728px;width:1091px;height:27px;background:#f0f0f0"></div><div class="abs" style="left:0;top:728px;width:1091px;height:1px;background:#f7f7f7"></div><div class="abs" style="left:0;top:729px;width:1091px;height:1px;background:#d9d9d9"></div>
<div class="sep" style="left:355px;top:732px;height:19px;background:#c8c8c8"></div>
<svg style="left:360px;top:729px" width="731" height="26" viewBox="360 729 731 26">
<path d="M365.500 749v-12.500h13v3.500h-9.500v9z" fill="#f4f4f4" stroke="#555" stroke-width="1"/>
<path d="M371 736.500v2M373.500 736.500v2M376 736.500v2M365.500 742h2M365.500 744.500h2M365.500 747h2" stroke="#555" stroke-width="0.800"/>
<path d="M548 736.500v10.500l2.700-2.500 2 4 1.600-.8-2-3.900 3.500-.3z" fill="#666"/>
<rect x="722.500" y="735" width="14" height="13.500" rx="1" fill="#f6f6f6" stroke="#555" stroke-width="1"/>
<path d="M724 747v-3l3.500-4 3.500 4.500 1.500-1.500 2.500 2.500v1.500z" fill="#666"/><circle cx="732.500" cy="739" r="1.600" fill="#666"/>
<path d="M866 742.500h8.500" stroke="#555" stroke-width="1.300"/>
<path d="M883 742.500h95" stroke="#a0a0a0" stroke-width="1"/>
<rect x="928.500" y="735" width="4.500" height="13" fill="#777"/>
<path d="M986.500 742.500h8.500M990.750 738.200v8.600" stroke="#555" stroke-width="1.300"/>
<path d="M1055.900 740.300l3.200 3.200 3.200-3.200" fill="none" stroke="#666" stroke-width="1.300"/>
<g fill="#929292"><rect x="1080" y="738" width="2" height="2"/><rect x="1076" y="742" width="2" height="2"/><rect x="1080" y="742" width="2" height="2"/><rect x="1072" y="746" width="2" height="2"/><rect x="1076" y="746" width="2" height="2"/><rect x="1080" y="746" width="2" height="2"/></g>
</svg>
<div class="t" style="left:389px;top:735px;color:#222;letter-spacing:0.35px">121 x 114</div>
<div class="t" style="left:567.5px;top:735px;color:#222;letter-spacing:0.2px">936, 103</div>
<div class="t" style="left:741px;top:735px;color:#222;letter-spacing:0.2px">844 x 433</div>
<div class="t" style="left:1016px;top:735px;color:#222">100%</div>

<div id="frame"></div>
</div>
</body>
</html>
